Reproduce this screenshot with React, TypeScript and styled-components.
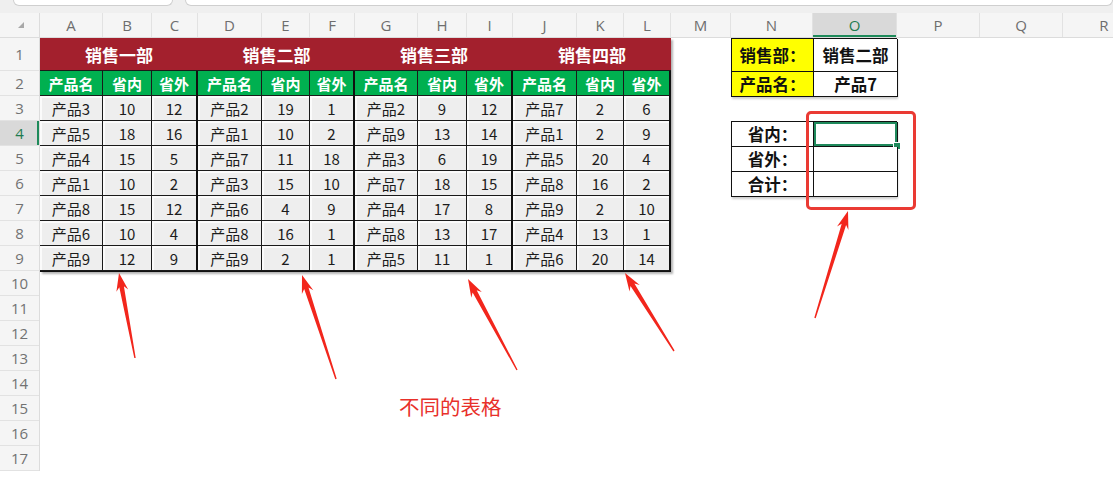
import styled, { createGlobalStyle } from 'styled-components';

const GlobalStyle = createGlobalStyle`
  html, body { margin: 0; padding: 0; background: #ffffff; overflow: hidden; }
  body { font-family: "Noto Sans CJK SC", "Noto Sans", sans-serif; }
  * { box-sizing: border-box; }
`;

const colWidths = [63, 49, 46, 64, 48, 45, 63, 49, 46, 64, 47, 47, 60, 82, 84, 83, 83, 83];
const letters = 'ABCDEFGHIJKLMNOPQR'.split('');
const rowHeights = [33, 25, 25, 25, 25, 25, 25, 25, 25, 25, 25, 25, 25, 25, 25, 25, 25];
const colTemplate = colWidths.map((w) => `${w}px`).join(' ');

const Page = styled.div`
  position: relative;
  width: 1113px;
  height: 479px;
  overflow: hidden;
  background: #ffffff;
`;

const TopStrip = styled.div`
  display: flex;
  gap: 12px;
  height: 13px;
  padding-left: 13px;
  background: #efefef;
`;

const BarBox = styled.div<{ $w?: number }>`
  height: 6px;
  ${({ $w }) => ($w ? `width: ${$w}px;` : 'flex: 1;')}
  background: #ffffff;
  border: 1px solid #cfcfcf;
  border-top: none;
  border-radius: 0 0 6px 6px;
`;

const HeaderRow = styled.div`
  display: grid;
  grid-template-columns: 40px ${colTemplate};
  height: 25px;
  background: #f5f5f5;
  border-bottom: 1px solid #dcdcdc;
`;

const Corner = styled.div`
  position: relative;
  border-right: 1px solid #dcdcdc;
  &::after {
    content: '';
    position: absolute;
    left: 18px;
    top: 9px;
    border-left: 6px solid transparent;
    border-bottom: 6px solid #a8a8a8;
  }
`;

const ColHead = styled.div<{ $active?: boolean }>`
  display: flex;
  align-items: center;
  justify-content: center;
  border-right: 1px solid #e2e2e2;
  font-family: "Open Sans", "Noto Sans", sans-serif;
  font-size: 15px;
  color: ${({ $active }) => ($active ? '#1e7b50' : '#6e6e6e')};
  background: ${({ $active }) => ($active ? '#d9d9d9' : 'transparent')};
  box-shadow: ${({ $active }) => ($active ? 'inset 0 -2px 0 #1e8a5a' : 'none')};
`;

const Body = styled.div`
  display: flex;
`;

const RowHeads = styled.div`
  display: flex;
  flex-direction: column;
  flex-shrink: 0;
  width: 40px;
  background: #f5f5f5;
  border-right: 1px solid #dcdcdc;
`;

const RowHead = styled.div<{ $h: number; $active?: boolean }>`
  height: ${({ $h }) => $h}px;
  display: flex;
  align-items: center;
  justify-content: center;
  border-bottom: 1px solid #e2e2e2;
  font-family: "Open Sans", "Noto Sans", sans-serif;
  font-size: 15px;
  color: ${({ $active }) => ($active ? '#1e7b50' : '#727272')};
  background: ${({ $active }) => ($active ? '#d9d9d9' : 'transparent')};
  box-shadow: ${({ $active }) => ($active ? 'inset -2px 0 0 #1e8a5a' : 'none')};
`;

const Canvas = styled.div`
  display: grid;
  flex-shrink: 0;
  grid-template-columns: ${colTemplate};
  grid-template-rows: ${rowHeights.map((h) => `${h}px`).join(' ')};
  align-items: start;
`;

const DataBlock = styled.div`
  grid-column: 1 / 13;
  grid-row: 1 / 11;
  display: flex;
  flex-direction: column;
  box-shadow: 2px 2px 2px rgba(0, 0, 0, 0.3);
`;

const TitleBar = styled.div`
  display: grid;
  grid-template-columns: 158px 157px 158px 158px;
  height: 33px;
  background: #a3202d;
  border-bottom: 1px solid #1a1a1a;
`;

const Title = styled.div`
  display: flex;
  align-items: center;
  justify-content: center;
  color: #ffffff;
  font-weight: 700;
  font-size: 17px;
`;

const Depts = styled.div`
  display: flex;
  border-bottom: 1px solid #111111;
`;

const Dept = styled.div<{ $cols: string; $w: number }>`
  display: grid;
  width: ${({ $w }) => $w}px;
  grid-template-columns: ${({ $cols }) => $cols};
  grid-auto-rows: 25px;
  border-right: 2px solid #111111;
`;

const Cell = styled.div<{ $head?: boolean }>`
  display: flex;
  align-items: center;
  justify-content: center;
  border-right: 1px solid #1a1a1a;
  border-bottom: 1px solid #1a1a1a;
  font-size: 15px;
  font-weight: ${({ $head }) => ($head ? 700 : 400)};
  color: ${({ $head }) => ($head ? '#ffffff' : '#1c1c1c')};
  background: ${({ $head }) => ($head ? '#00b050' : '#eeeeee')};
  box-shadow: ${({ $head }) => ($head ? 'none' : 'inset 2px 2px 0 #fbfbfb')};
  &:nth-child(3n) { border-right: none; }
`;

const InfoGrid = styled.div<{ $row: string; $rows: string }>`
  grid-column: 14 / 16;
  grid-row: ${({ $row }) => $row};
  display: grid;
  grid-template-columns: 82px 84px;
  grid-template-rows: ${({ $rows }) => $rows};
  border-left: 1px solid #111111;
  border-top: 1px solid #111111;
  box-shadow: 1px 2px 2px rgba(0, 0, 0, 0.2);
`;

const InfoCell = styled.div<{ $yellow?: boolean; $selected?: boolean }>`
  position: relative;
  display: flex;
  align-items: center;
  justify-content: center;
  border-right: 1px solid #111111;
  border-bottom: 1px solid #111111;
  font-weight: 700;
  font-size: 16.5px;
  color: #111111;
  background: ${({ $yellow }) => ($yellow ? '#ffff00' : '#ffffff')};
  box-shadow: ${({ $selected }) => ($selected ? 'inset 0 0 0 2px #1f8a5c' : 'none')};
  ${({ $selected }) =>
    $selected &&
    `&::after {
      content: '';
      position: absolute;
      right: -4px;
      bottom: -4px;
      width: 6px;
      height: 6px;
      background: #1f8a5c;
      border: 1px solid #ffffff;
    }`}
`;

const RedBox = styled.div`
  position: absolute;
  left: 806px;
  top: 111px;
  width: 110px;
  height: 99px;
  border: 3px solid #ea3a33;
  border-radius: 5px;
`;

const Note = styled.div`
  position: absolute;
  left: 399px;
  top: 394px;
  font-size: 20.5px;
  line-height: 24px;
  color: #e8302a;
`;

const Overlay = styled.svg`
  position: absolute;
  left: 0;
  top: 0;
  pointer-events: none;
`;

const depts = [
  {
    title: '销售一部', w: 158, cols: '63px 49px 44px',
    rows: [['产品3', 10, 12], ['产品5', 18, 16], ['产品4', 15, 5], ['产品1', 10, 2], ['产品8', 15, 12], ['产品6', 10, 4], ['产品9', 12, 9]],
  },
  {
    title: '销售二部', w: 157, cols: '64px 48px 43px',
    rows: [['产品2', 19, 1], ['产品1', 10, 2], ['产品7', 11, 18], ['产品3', 15, 10], ['产品6', 4, 9], ['产品8', 16, 1], ['产品9', 2, 1]],
  },
  {
    title: '销售三部', w: 158, cols: '63px 49px 44px',
    rows: [['产品2', 9, 12], ['产品9', 13, 14], ['产品3', 6, 19], ['产品7', 18, 15], ['产品4', 17, 8], ['产品8', 13, 17], ['产品5', 11, 1]],
  },
  {
    title: '销售四部', w: 158, cols: '64px 47px 45px',
    rows: [['产品7', 2, 6], ['产品1', 2, 9], ['产品5', 20, 4], ['产品8', 16, 2], ['产品9', 2, 10], ['产品4', 13, 1], ['产品6', 20, 14]],
  },
];

// tip x, tip y, tail x, tail y
const arrows = [
  [119, 273, 135, 358],
  [302, 275, 336, 379],
  [468, 279, 517, 370],
  [625, 273, 674, 351],
  [848, 211, 815, 318],
];

function arrowPoints(tx: number, ty: number, ex: number, ey: number) {
  const dx = ex - tx;
  const dy = ey - ty;
  const len = Math.hypot(dx, dy);
  const ux = dx / len;
  const uy = dy / len;
  const nx = -uy;
  const ny = ux;
  const p = (a: number, b: number) =>
    `${(tx + ux * a + nx * b).toFixed(1)},${(ty + uy * a + ny * b).toFixed(1)}`;
  return [p(0, 0), p(18, 6), p(14, 2.3), p(len, 0.7), p(len, -0.7), p(14, -2.3), p(18, -6)].join(' ');
}

export default function App() {
  return (
    <Page>
      <GlobalStyle />
      <TopStrip>
        <BarBox $w={160} />
        <BarBox />
      </TopStrip>
      <HeaderRow>
        <Corner />
        {letters.map((l) => (
          <ColHead key={l} $active={l === 'O'}>{l}</ColHead>
        ))}
      </HeaderRow>
      <Body>
        <RowHeads>
          {rowHeights.map((h, i) => (
            <RowHead key={i} $h={h} $active={i === 3}>{i + 1}</RowHead>
          ))}
        </RowHeads>
        <Canvas>
          <DataBlock>
            <TitleBar>
              {depts.map((d) => (
                <Title key={d.title}>{d.title}</Title>
              ))}
            </TitleBar>
            <Depts>
              {depts.map((d) => (
                <Dept key={d.title} $cols={d.cols} $w={d.w}>
                  <Cell $head>产品名</Cell>
                  <Cell $head>省内</Cell>
                  <Cell $head>省外</Cell>
                  {d.rows.map((r, i) =>
                    r.map((v, j) => <Cell key={`${i}-${j}`}>{v}</Cell>)
                  )}
                </Dept>
              ))}
            </Depts>
          </DataBlock>

          <InfoGrid $row="1 / 3" $rows="33px 25px">
            <InfoCell $yellow>销售部：</InfoCell>
            <InfoCell>销售二部</InfoCell>
            <InfoCell $yellow>产品名：</InfoCell>
            <InfoCell>产品7</InfoCell>
          </InfoGrid>

          <InfoGrid $row="4 / 8" $rows="25px 25px 25px">
            <InfoCell>省内：</InfoCell>
            <InfoCell $selected />
            <InfoCell>省外：</InfoCell>
            <InfoCell />
            <InfoCell>合计：</InfoCell>
            <InfoCell />
          </InfoGrid>
        </Canvas>
      </Body>

      <RedBox />
      <Note>不同的表格</Note>
      <Overlay width="1113" height="479" viewBox="0 0 1113 479">
        {arrows.map((a, i) => (
          <polygon key={i} points={arrowPoints(a[0], a[1], a[2], a[3])} fill="#f2261c" />
        ))}
      </Overlay>
    </Page>
  );
}
